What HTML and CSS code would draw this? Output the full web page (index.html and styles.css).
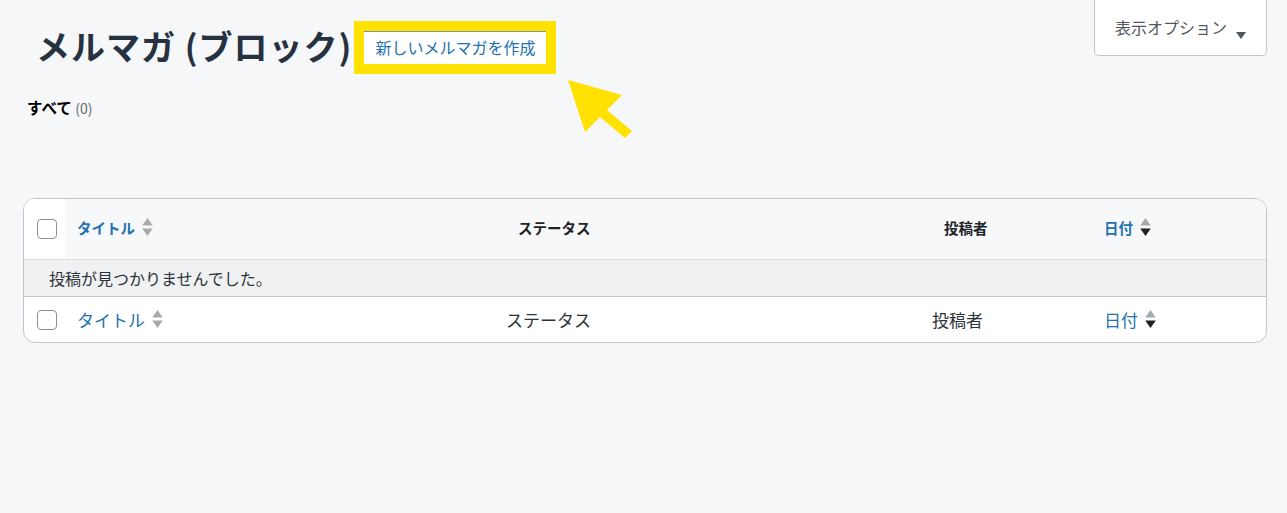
FILE: index.html
```html
<!DOCTYPE html>
<html lang="ja">
<head>
<meta charset="utf-8">
<title>メルマガ (ブロック)</title>
<link rel="stylesheet" href="styles.css">
</head>
<body>
<div class="page">
  <div class="top">
    <div class="heading">
      <h1>メルマガ (ブロック)</h1>
      <div class="highlight"><a class="add-new" href="#">新しいメルマガを作成</a></div>
    </div>
    <button class="screen-opts">表示オプション<span class="caret"></span></button>
  </div>
  <svg class="pointer" width="80" height="70" viewBox="560 75 80 70"><polygon points="568,80 622,95 607,110 632,131 625,138 600,117 585,132" fill="#ffe200"/></svg>

  <div class="subsub"><b>すべて</b> <span class="count">(0)</span></div>

  <div class="table">
    <div class="row head">
      <div class="cb cb-head"><span class="box"></span></div>
      <div class="cell title"><a href="#">タイトル</a><svg class="sort" viewBox="0 0 10 18"><polygon points="5,0 10,7 0,7" fill="#a7aaad"/><polygon points="0,10 10,10 5,17" fill="#a7aaad"/></svg></div>
      <div class="cell status">ステータス</div>
      <div class="cell author">投稿者</div>
      <div class="cell date"><a href="#">日付</a><svg class="sort" viewBox="0 0 10 18"><polygon points="5,0 10,7 0,7" fill="#a7aaad"/><polygon points="0,10 10,10 5,17" fill="#1d2327"/></svg></div>
    </div>
    <div class="row empty">投稿が見つかりませんでした。</div>
    <div class="row foot">
      <div class="cb"><span class="box"></span></div>
      <div class="cell title"><a href="#">タイトル</a><svg class="sort" viewBox="0 0 10 18"><polygon points="5,0 10,7 0,7" fill="#a7aaad"/><polygon points="0,10 10,10 5,17" fill="#a7aaad"/></svg></div>
      <div class="cell status">ステータス</div>
      <div class="cell author">投稿者</div>
      <div class="cell date"><a href="#">日付</a><svg class="sort" viewBox="0 0 10 18"><polygon points="5,0 10,7 0,7" fill="#a7aaad"/><polygon points="0,10 10,10 5,17" fill="#1d2327"/></svg></div>
    </div>
  </div>
</div>
</body>
</html>
```
FILE: styles.css
```css
* { box-sizing: border-box; }
body {
  margin: 0;
  background: #f6f7f9;
  font-family: "Noto Sans CJK JP", "Noto Sans", sans-serif;
  color: #1d2327;
}
a { color: #2271b1; text-decoration: none; }
.page {
  position: relative;
  padding: 0 20px 0 23px;
}
.top {
  display: flex;
  justify-content: space-between;
  align-items: flex-start;
}
.heading {
  display: flex;
  align-items: center;
  margin-top: 21px;
}
h1 {
  margin: 0 2px 0 13px;
  padding-bottom: 3px;
  font-size: 34px;
  letter-spacing: 1px;
  line-height: 50px;
  font-weight: 700;
  color: #26323f;
}
.highlight {
  border: 10px solid #ffe200;
  background: #fff;
}
.add-new {
  display: block;
  width: 182px;
  height: 33px;
  border-top: 1px solid #8a9099;
  text-align: center;
  font-size: 16px;
  line-height: 31px;
  color: #2271b1;
}
.screen-opts {
  width: 173px;
  height: 56px;
  border: 1px solid #c3c4c7;
  border-top: none;
  border-radius: 0 0 5px 5px;
  background: #fff;
  display: flex;
  align-items: center;
  padding: 0 0 2px 20px;
  font-family: inherit;
  font-size: 16px;
  color: #50575e;
}
.caret {
  width: 0;
  height: 0;
  margin: 18px 0 0 9px;
  border-left: 5.5px solid transparent;
  border-right: 5.5px solid transparent;
  border-top: 7px solid #50575e;
}
.pointer {
  position: absolute;
  left: 560px;
  top: 75px;
}
.subsub {
  margin: 23px 0 0 4px;
  height: 20px;
  font-size: 15.5px;
  line-height: 20px;
  color: #000;
}
.subsub b { font-weight: 700; }
.count { color: #646970; font-size: 14px; }
.table {
  margin-top: 81px;
  border: 1px solid #c3c4c7;
  border-radius: 12px;
  overflow: hidden;
  background: #fff;
}
.row {
  display: grid;
  grid-template-columns: 42px 400px 160px 470px 1fr;
  align-items: center;
}
.head {
  height: 61px;
  background: #f7f8fa;
  border-bottom: 1px solid #dcdcde;
  font-size: 14.5px;
  font-weight: 700;
}
.head .cell { padding-bottom: 3px; }
.cb {
  height: 100%;
  display: flex;
  align-items: center;
  padding-left: 13px;
}
.cb-head { background: #fff; }
.box {
  width: 20px;
  height: 20px;
  border: 1px solid #8c8f94;
  border-radius: 4px;
  background: #fff;
}
.cell {
  display: flex;
  align-items: center;
}
.title { padding-left: 11px; }
.sort { width: 11px; height: 19px; margin-left: 7px; }
.head .status { padding-left: 52px; }
.head .author { padding-left: 318px; }
.date { padding-left: 8px; }
.empty {
  display: block;
  height: 37px;
  background: #f0f1f2;
  border-bottom: 1px solid #c3c4c7;
  padding-left: 25px;
  font-size: 16px;
  line-height: 36px;
  color: #2c3338;
}
.foot {
  height: 45px;
  font-size: 17px;
  color: #2c3338;
}
.foot .cell { padding-bottom: 1px; }
.foot .status { padding-left: 40px; }
.foot .author { padding-left: 306px; }
```
